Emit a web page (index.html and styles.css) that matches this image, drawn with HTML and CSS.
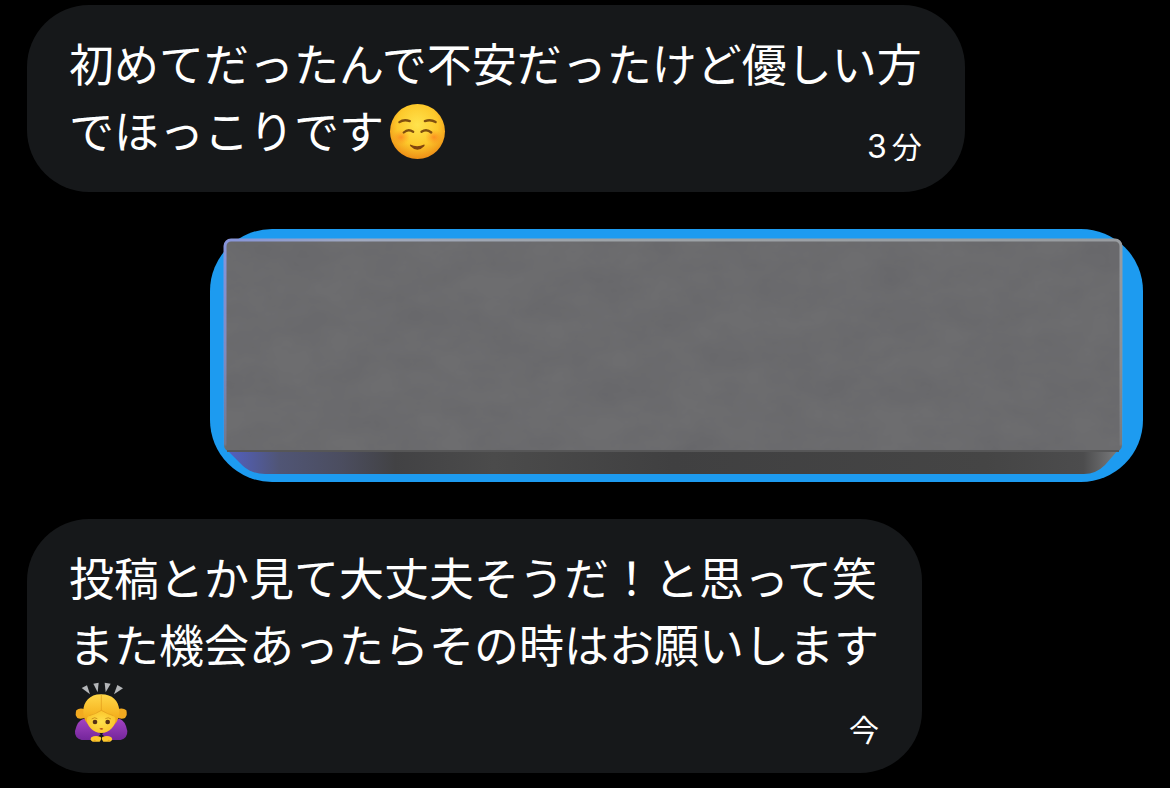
FILE: index.html
```
<!DOCTYPE html>
<html lang="ja">
<head>
    <meta charset="UTF-8">
    <meta name="viewport" content="width=device-width, initial-scale=1.0">
    <title>メッセージ</title>
    <link rel="stylesheet" href="styles.css">
</head>
<body>
    <main class="chat">
        <div class="bubble received">
            <p class="text">初めてだったんで不安だったけど優しい方<br>でほっこりです<svg class="emoji smile" viewBox="26 24 170 170" role="img" aria-label="笑顔">
                <defs>
                    <radialGradient id="smileFace" cx="50%" cy="38%" r="62%">
                        <stop offset="0" stop-color="#ffe34d"/>
                        <stop offset="0.6" stop-color="#fdc92b"/>
                        <stop offset="1" stop-color="#ee8e16"/>
                    </radialGradient>
                    <radialGradient id="blush">
                        <stop offset="0" stop-color="#fb6a1c" stop-opacity="0.6"/>
                        <stop offset="1" stop-color="#fb8a1c" stop-opacity="0"/>
                    </radialGradient>
                </defs>
                <circle cx="111" cy="109" r="82" fill="url(#smileFace)"/>
                <ellipse cx="62" cy="126" rx="26" ry="23" fill="url(#blush)"/>
                <ellipse cx="160" cy="126" rx="26" ry="23" fill="url(#blush)"/>
                <g fill="none" stroke="#80500f" stroke-width="7" stroke-linecap="round">
                    <path d="M57 81Q70 72 88 78"/>
                    <path d="M133 78Q151 72 165 81"/>
                    <path d="M70 112Q83 100 98 110"/>
                    <path d="M123 110Q138 100 152 112"/>
                </g>
                <path d="M89 148Q110 158 131 148Q134 148 131 153Q111 174 90 153Q87 148 89 148Z" fill="#80440e"/>
            </svg></p>
            <time class="time"><span class="num">3</span>分</time>
        </div>

        <div class="bubble sent">
            <svg class="slab" viewBox="0 0 900 237" preserveAspectRatio="none" aria-hidden="true">
                <defs>
                    <linearGradient id="lip">
                        <stop offset="0" stop-color="#5260c4"/>
                        <stop offset="0.06" stop-color="#505575"/>
                        <stop offset="0.13" stop-color="#4b4d5f"/>
                        <stop offset="0.19" stop-color="#424244"/>
                        <stop offset="0.3" stop-color="#4b4b4b"/>
                        <stop offset="0.5" stop-color="#404041"/>
                        <stop offset="0.85" stop-color="#454545"/>
                        <stop offset="0.96" stop-color="#4c4c4d"/>
                        <stop offset="1" stop-color="#7b7c7e"/>
                    </linearGradient>
                    <linearGradient id="edge">
                        <stop offset="0" stop-color="#8795dc"/>
                        <stop offset="0.15" stop-color="#a1aac0"/>
                        <stop offset="0.4" stop-color="#9fa5aa"/>
                        <stop offset="1" stop-color="#999da1"/>
                    </linearGradient>
                    <linearGradient id="fade" x2="0" y2="1">
                        <stop offset="0" stop-color="#fff"/>
                        <stop offset="0.5" stop-color="#bbb"/>
                        <stop offset="0.87" stop-color="#444"/>
                        <stop offset="0.88" stop-color="#000"/>
                    </linearGradient>
                    <mask id="edgeMask"><rect width="900" height="237" fill="url(#fade)"/></mask>
                    <filter id="grain" x="0" y="0" width="100%" height="100%" color-interpolation-filters="sRGB">
                        <feTurbulence type="fractalNoise" baseFrequency="0.02 0.03" numOctaves="4" seed="8"/>
                        <feColorMatrix values="0 0 0 0 0.37  0 0 0 0 0.37  0 0 0 0 0.39  0.6 0 0 0 -0.15"/>
                    </filter>
                </defs>
                <path d="M3 211H896L882 227Q873 236 861 236H42Q29 236 20 228Z" fill="url(#lip)"/>
                <rect x="1" y="1" width="898" height="213" rx="7" fill="#6d6d6f"/>
                <rect x="3" y="3" width="894" height="209" rx="5" filter="url(#grain)"/>
                <path d="M4 213H896" stroke="#565657" stroke-width="2"/>
                <rect x="2" y="2" width="896" height="211" rx="6" fill="none" stroke="url(#edge)" stroke-width="3" mask="url(#edgeMask)"/>
            </svg>
        </div>

        <div class="bubble received">
            <p class="text">投稿とか見て大丈夫そうだ！と思って笑<br>また機会あったらその時はお願いします<br><svg class="emoji bow" viewBox="28 20 162 186" role="img" aria-label="お辞儀">
                <defs>
                    <linearGradient id="hair" x2="0" y2="1">
                        <stop offset="0" stop-color="#ffd748"/>
                        <stop offset="0.6" stop-color="#f6b623"/>
                        <stop offset="1" stop-color="#e99a13"/>
                    </linearGradient>
                    <radialGradient id="bowFace">
                        <stop offset="0" stop-color="#ffe04c"/>
                        <stop offset="1" stop-color="#fbc62c"/>
                    </radialGradient>
                    <linearGradient id="sleeve" x2="0" y2="1">
                        <stop offset="0" stop-color="#a344c2"/>
                        <stop offset="1" stop-color="#74269b"/>
                    </linearGradient>
                </defs>
                <g fill="#b4b6b9">
                    <path d="M51 41L67 33L76 60Z"/>
                    <path d="M86 28L102 25L99 54Z"/>
                    <path d="M120 25L138 28L123 54Z"/>
                    <path d="M158 32L175 42L148 60Z"/>
                </g>
                <path d="M57 133Q38 138 31 170Q29 191 51 197H88L108 180L68 138Z" fill="url(#sleeve)"/>
                <path d="M164 133Q182 138 188 170Q189 191 168 197H132L112 180L151 138Z" fill="url(#sleeve)"/>
                <path d="M63 106Q45 98 35 108Q30 122 38 131Q50 136 65 128Z" fill="#f2aa20"/>
                <path d="M156 106Q174 98 185 108Q189 122 181 131Q169 136 154 128Z" fill="#f2aa20"/>
                <path d="M110 60C76 59 56 82 56 111C56 134 65 148 78 156H142C156 147 164 132 164 109C162 79 143 60 110 60Z" fill="url(#hair)"/>
                <path d="M110 109C96 115 73 120 67 131C63 154 86 176 110 176C134 176 156 154 152 131C146 120 124 116 110 109Z" fill="url(#bowFace)"/>
                <path d="M110 62V108Q93 119 74 124M110 108Q128 119 146 124" fill="none" stroke="#df981a" stroke-width="2"/>
                <path d="M81 134Q90 127 98 133M122 133Q131 127 139 134" fill="none" stroke="#b57411" stroke-width="2"/>
                <ellipse cx="91" cy="143" rx="7" ry="7" fill="#573015"/>
                <ellipse cx="129" cy="143" rx="7" ry="7" fill="#573015"/>
                <path d="M104 163Q110 159 116 163Q112 169 104 163Z" fill="#b94e18"/>
                <path d="M80 189Q92 181 108 188Q112 194 105 202H84Q74 198 80 189Z" fill="#fdc72c"/>
                <path d="M140 189Q128 181 113 188Q109 194 116 202H136Q147 198 140 189Z" fill="#fdc72c"/>
                <path d="M86 201Q89 195 94 201M128 201Q132 195 136 201" fill="none" stroke="#d88c15" stroke-width="2"/>
            </svg></p>
            <time class="time">今</time>
        </div>
    </main>
</body>
</html>
```
FILE: styles.css
```
body {
    margin: 0;
    background: #000;
    color: #fff;
    font-family: "Noto Sans CJK JP", sans-serif;
}

.chat {
    display: flex;
    flex-direction: column;
    gap: 37px;
    padding: 5px 27px 15px;
}

.bubble {
    border-radius: 62px;
}

/* text and time share one cell, time sits bottom right */
.received {
    display: grid;
    align-self: flex-start;
    padding: 24px 43px 29px 42px;
    background: #16181a;
}

.text,
.time {
    grid-area: 1 / 1;
}

.text {
    margin: 0;
    font-size: 45px;
    line-height: 67px;
}

.time {
    align-self: end;
    justify-self: end;
    font-size: 30px;
    line-height: 32px;
}

.num {
    margin-right: 5px;
    font-family: Inter, sans-serif;
    font-size: 32px;
    line-height: 1;
}

.emoji {
    display: inline-block;
    margin-left: 5px;
}

.smile {
    width: 57px;
    height: 57px;
    vertical-align: -11px;
}

.bow {
    width: 54px;
    height: 62px;
    vertical-align: -13px;
}

.sent {
    margin-left: 183px;
    padding: 9px 20px 7px 13px;
    background: #1d9bf0;
}

.slab {
    display: block;
    width: 100%;
    height: 237px;
}
```
